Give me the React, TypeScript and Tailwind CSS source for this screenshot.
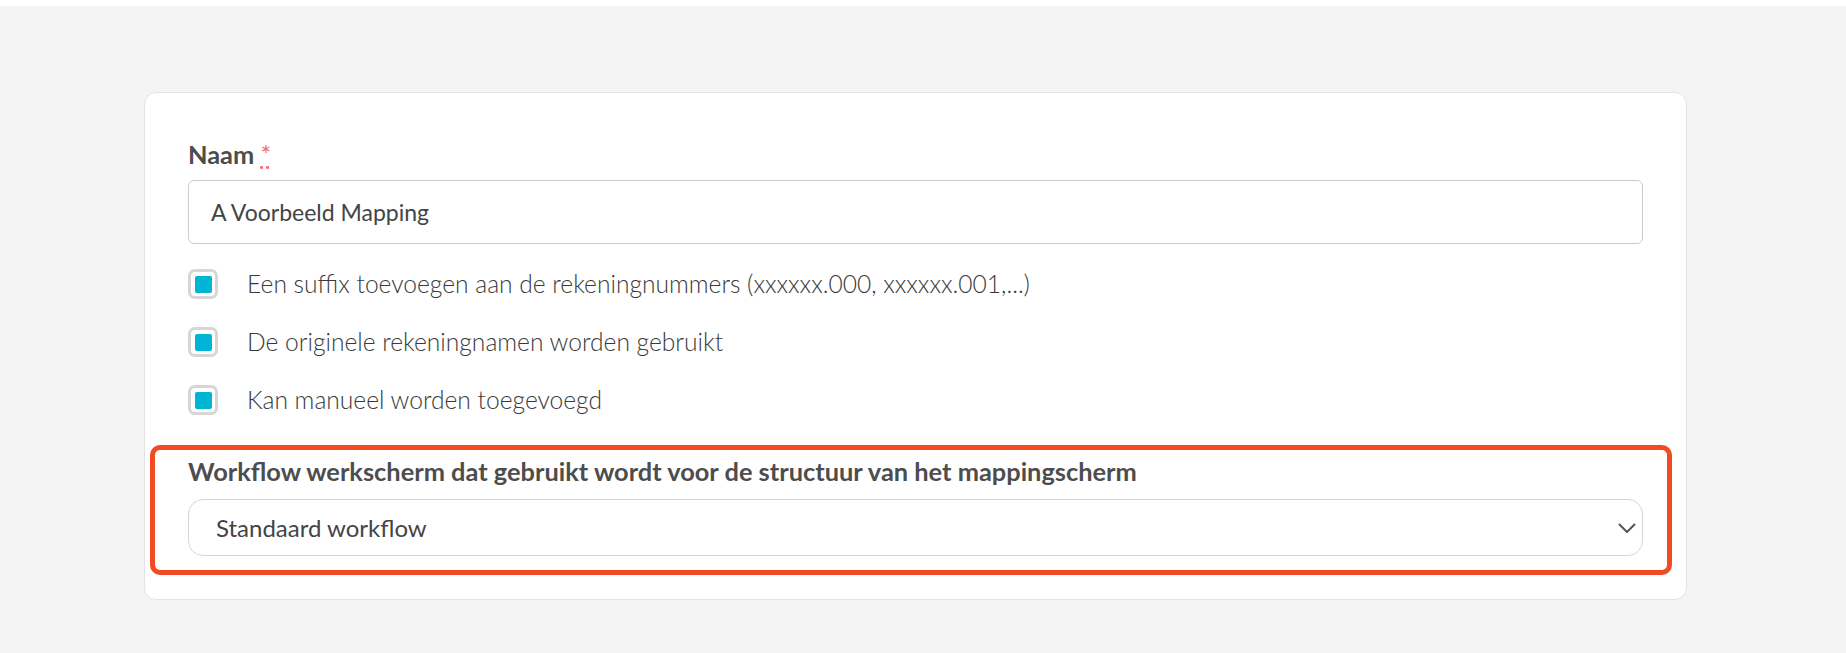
import React from 'react';

const options = [
  { id: 'suffix', label: 'Een suffix toevoegen aan de rekeningnummers (xxxxxx.000, xxxxxx.001,...)' },
  { id: 'names', label: 'De originele rekeningnamen worden gebruikt' },
  { id: 'manual', label: 'Kan manueel worden toegevoegd' },
];

function Check() {
  return (
    <span className="w-[30px] h-[30px] shrink-0 rounded-[7px] border-[3px] border-[#d6d6d6] bg-white flex items-center justify-center">
      <span className="w-[17px] h-[17px] rounded-[2px] bg-[#00b4d6]" />
    </span>
  );
}

export default function App() {
  return (
    <div className="min-h-screen bg-white pt-[6px] font-['Lato',sans-serif]">
      <div className="h-[647px] bg-[#f4f4f4] pt-[86px] pl-[144px]">
        <div className="w-[1543px] bg-white border border-[#e3e3e3] rounded-[12px] pt-[46px] pb-[24px] px-[43px]">
          {/* Naam */}
          <label className="block text-[25.4px] leading-[31px] font-bold text-[#4d4d4d]">
            Naam <abbr title="required" className="text-[#f36b6b] font-normal">*</abbr>
          </label>
          <div className="mt-[10px] h-[64px] border border-[#cccccc] rounded-[6px] flex items-center pl-[22px] text-[23px] text-[#444444]">
            A Voorbeeld Mapping
          </div>

          {/* Options */}
          <div className="mt-[25px] flex flex-col gap-[28px]">
            {options.map(o => (
              <div key={o.id} className="flex items-center gap-[29px]">
                <Check />
                <span className="text-[24.6px] leading-[30px] font-light text-[#3a3a3a]">{o.label}</span>
              </div>
            ))}
          </div>

          {/* Workflow select, highlighted */}
          <div className="mt-[30px] -ml-[38px] -mr-[29px] border-[5px] border-[#f24a22] rounded-[10px] pt-[6px] pb-[14px] pl-[33px] pr-[24px]">
            <div className="text-[25.4px] leading-[31px] font-bold text-[#4d4d4d]">
              Workflow werkscherm dat gebruikt wordt voor de structuur van het mappingscherm
            </div>
            <div className="mt-[12px] h-[57px] border border-[#d6d6d6] rounded-[15px] flex items-center justify-between pl-[27px] pr-[6px] text-[24px] text-[#444444]">
              <span>Standaard workflow</span>
              <svg width="18" height="10" viewBox="0 0 18 10" fill="none" stroke="#555555" strokeWidth="2">
                <path d="M1 1l8 8 8-8" />
              </svg>
            </div>
          </div>
        </div>
      </div>
    </div>
  );
}
